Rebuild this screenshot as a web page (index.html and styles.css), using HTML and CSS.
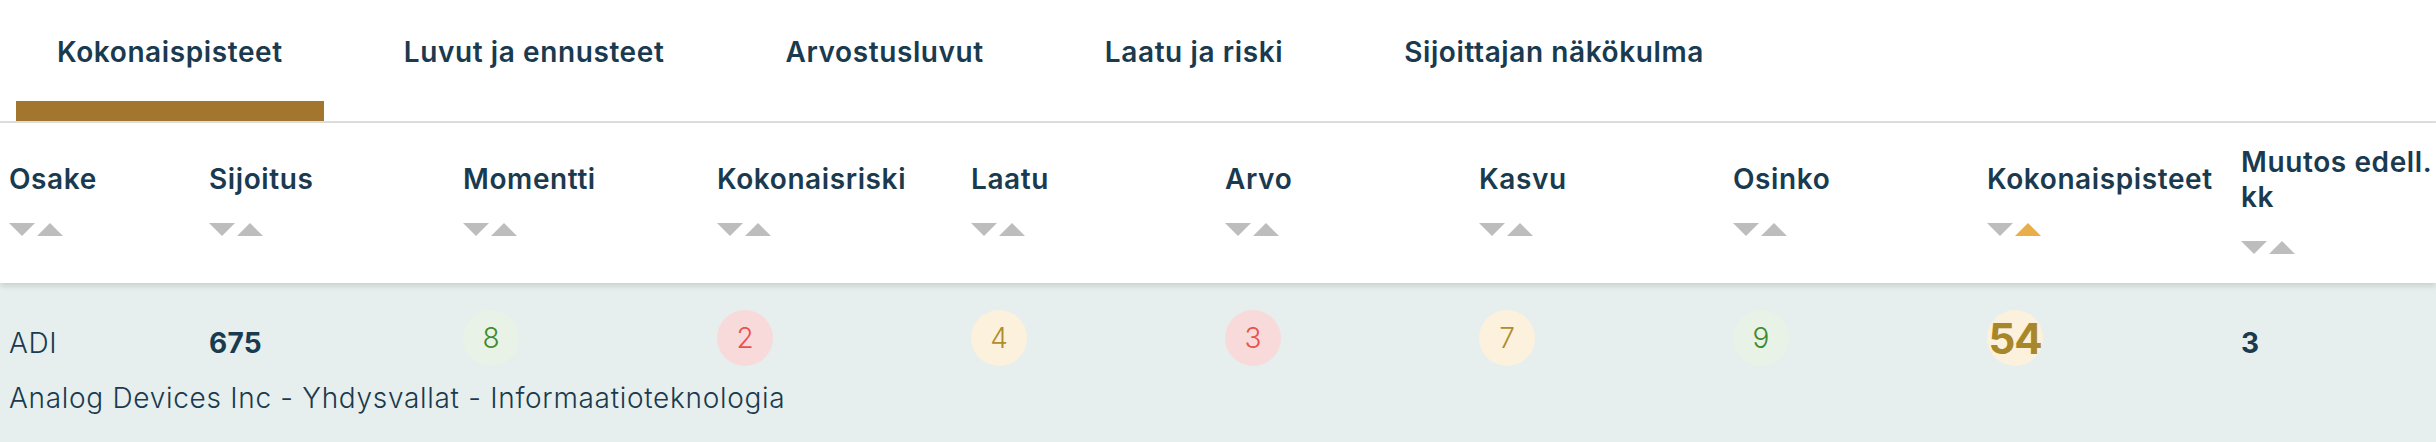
FILE: index.html
```html
<!DOCTYPE html>
<html lang="fi">
<head>
<meta charset="utf-8">
<title>Kokonaispisteet</title>
<link rel="stylesheet" href="styles.css">
</head>
<body>
<nav class="tabs">
  <div class="tab active">Kokonaispisteet</div>
  <div class="tab">Luvut ja ennusteet</div>
  <div class="tab">Arvostusluvut</div>
  <div class="tab">Laatu ja riski</div>
  <div class="tab">Sijoittajan näkökulma</div>
</nav>
<div class="table">
  <div class="thead">
    <div class="th"><span class="label">Osake</span><span class="sort"><i class="down"></i><i class="up"></i></span></div>
    <div class="th"><span class="label">Sijoitus</span><span class="sort"><i class="down"></i><i class="up"></i></span></div>
    <div class="th"><span class="label">Momentti</span><span class="sort"><i class="down"></i><i class="up"></i></span></div>
    <div class="th"><span class="label">Kokonaisriski</span><span class="sort"><i class="down"></i><i class="up"></i></span></div>
    <div class="th"><span class="label">Laatu</span><span class="sort"><i class="down"></i><i class="up"></i></span></div>
    <div class="th"><span class="label">Arvo</span><span class="sort"><i class="down"></i><i class="up"></i></span></div>
    <div class="th"><span class="label">Kasvu</span><span class="sort"><i class="down"></i><i class="up"></i></span></div>
    <div class="th"><span class="label">Osinko</span><span class="sort"><i class="down"></i><i class="up"></i></span></div>
    <div class="th"><span class="label">Kokonaispisteet</span><span class="sort"><i class="down"></i><i class="up on"></i></span></div>
    <div class="th"><span class="label"><span class="nw">Muutos edell.</span> kk</span><span class="sort"><i class="down"></i><i class="up"></i></span></div>
  </div>
  <div class="row">
    <div class="cell txt">ADI</div>
    <div class="cell txt strong">675</div>
    <div class="cell"><span class="score green">8</span></div>
    <div class="cell"><span class="score red">2</span></div>
    <div class="cell"><span class="score yellow">4</span></div>
    <div class="cell"><span class="score red">3</span></div>
    <div class="cell"><span class="score yellow">7</span></div>
    <div class="cell"><span class="score green">9</span></div>
    <div class="cell"><span class="score yellow total">54</span></div>
    <div class="cell txt strong">3</div>
    <div class="desc">Analog Devices Inc - Yhdysvallat - Informaatioteknologia</div>
  </div>
</div>
</body>
</html>
```
FILE: styles.css
```css
html, body {
  margin: 0;
  padding: 0;
}
body {
  width: 2436px;
  height: 442px;
  overflow: hidden;
  background: #e6efed;
  color: #1a3a4f;
  font-family: Inter, "Noto Sans", sans-serif;
}

/* Tabs */
.tabs {
  display: flex;
  gap: 39px;
  padding-left: 16px;
  height: 121px;
  border-bottom: 2px solid #dfdfdf;
  background: #fff;
}
.tab {
  box-sizing: border-box;
  height: 121px;
  padding: 35px 41px 0;
  border-bottom: 20px solid transparent;
  font-size: 28px;
  line-height: 34px;
  font-weight: 600;
  letter-spacing: 0.6px;
  white-space: nowrap;
}
.tab.active {
  border-bottom-color: #a37630;
}

/* Table */
.thead,
.row {
  display: grid;
  grid-template-columns: 200px repeat(8, 254px) 1fr;
  padding-left: 9px;
}
.thead {
  box-sizing: border-box;
  height: 160px;
  padding-bottom: 8px;
  align-items: center;
  background: #fff;
  box-shadow: 0 3px 6px rgba(0, 0, 0, 0.13);
  position: relative;
  z-index: 1;
}
.th {
  display: flex;
  flex-direction: column;
  align-items: flex-start;
}
.label {
  font-size: 28px;
  line-height: 35px;
  font-weight: 600;
  letter-spacing: 0.6px;
}
.nw {
  white-space: nowrap;
}
.sort {
  display: flex;
  gap: 2px;
  margin-top: 26px;
}
.sort i {
  display: block;
  width: 0;
  height: 0;
  border-left: 13px solid transparent;
  border-right: 13px solid transparent;
}
.sort .down {
  border-top: 13px solid #bdbdbd;
}
.sort .up {
  border-bottom: 13px solid #bdbdbd;
}
.sort .up.on {
  border-bottom-color: #e9ad4a;
}

.row {
  padding-top: 27px;
  align-items: start;
  align-content: start;
}
.cell {
  box-sizing: border-box;
  height: 56px;
  font-size: 28px;
}
.txt {
  padding-top: 5px;
  line-height: 56px;
  font-weight: 300;
  letter-spacing: 0.6px;
}
.strong {
  font-weight: 700;
  letter-spacing: 0.3px;
}
.score {
  display: flex;
  align-items: center;
  justify-content: center;
  width: 56px;
  height: 56px;
  border-radius: 50%;
  font-size: 28px;
  font-weight: 300;
}
.green {
  background: #e8f2e6;
  color: #3d8b2e;
}
.red {
  background: #f8dadb;
  color: #e8524f;
}
.yellow {
  background: #fcf1dc;
  color: #b08c2c;
}
.score.total {
  font-size: 42px;
  font-weight: 700;
  letter-spacing: -1px;
  color: #a8862a;
}
.desc {
  grid-column: 1 / -1;
  margin-top: 12px;
  font-size: 28px;
  line-height: 40px;
  font-weight: 300;
  letter-spacing: 0.7px;
}
```
